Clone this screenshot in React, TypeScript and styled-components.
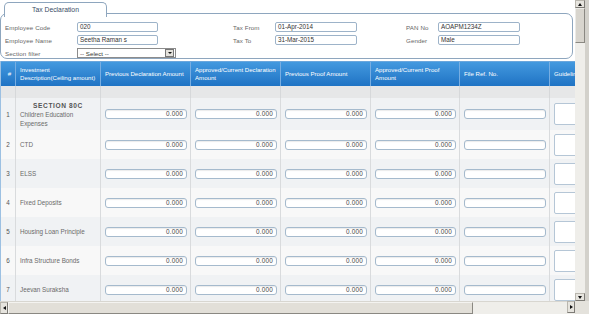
import styled, { createGlobalStyle } from "styled-components";

const GlobalStyle = createGlobalStyle`
  html, body {
    margin: 0;
    padding: 0;
    background: #fff;
  }
  body {
    font-family: "Liberation Sans", Arial, sans-serif;
  }
`;

const Frame = styled.div`
  width: 589px;
  height: 314px;
  overflow: hidden;
  display: grid;
  grid-template-columns: 575px 14px;
  grid-template-rows: 301px 13px;
  background: #fff;
`;

const Viewport = styled.div`
  overflow: hidden;
  display: flex;
  flex-direction: column;
`;

const TabRow = styled.div`
  display: flex;
  padding: 2px 0 0 4px;
  margin-bottom: -4px;
  position: relative;
  z-index: 1;
`;

const Tab = styled.div`
  width: 101px;
  height: 14px;
  border: 1px solid #8ea6be;
  border-bottom: none;
  border-radius: 5px 5px 0 0;
  background: #fff;
  color: #3a4d66;
  font-size: 6.8px;
  line-height: 14px;
  text-align: center;
`;

const Panel = styled.div`
  width: 573px;
  height: 50px;
  box-sizing: border-box;
  border: 1px solid #8ea6be;
  border-radius: 7px;
  padding: 8px 0 0 4px;
  display: grid;
  grid-template-columns: 72px 156px 42px 131px 32px 1fr;
  grid-auto-rows: 10px;
  row-gap: 3px;
  align-items: center;
`;

const Label = styled.span`
  font-size: 6.2px;
  color: #666;
  letter-spacing: 0.1px;
  white-space: nowrap;
`;

const TextBox = styled.div<{ $w?: number }>`
  width: ${(p) => p.$w ?? 82}px;
  height: 10px;
  box-sizing: border-box;
  border: 1px solid #9db3c9;
  border-radius: 2px;
  font-size: 6.3px;
  line-height: 8px;
  color: #333;
  padding-left: 2px;
  background: #fff;
`;

const SelectBox = styled.div`
  width: 99px;
  height: 10px;
  box-sizing: border-box;
  border: 1px solid #8c8c8c;
  display: flex;
  align-items: center;
  justify-content: space-between;
  font-size: 6.2px;
  color: #333;
  padding-left: 2px;
  background: #fff;
`;

const SelectButton = styled.span`
  width: 7px;
  height: 6px;
  margin-right: 1px;
  border: 1px solid #777;
  background: #e4e2dc;
  display: flex;
  align-items: center;
  justify-content: center;
  &::after {
    content: "";
    border-left: 2px solid transparent;
    border-right: 2px solid transparent;
    border-top: 2px solid #111;
  }
`;

const Table = styled.div`
  margin-top: 2px;
  border-left: 1px solid #9cc0e2;
  width: 660px;
`;

const cols = "15px 85px 90px 90px 90px 89px 90px 110px";

const HeadRow = styled.div`
  display: grid;
  grid-template-columns: ${cols};
  height: 24px;
  background: linear-gradient(#4399df, #1f73c4);
  border-top: 1px solid #6aa6dc;
`;

const HeadCell = styled.div<{ $center?: boolean }>`
  display: flex;
  align-items: center;
  justify-content: ${(p) => (p.$center ? "center" : "flex-start")};
  padding: 0 1px 0 4px;
  border-right: 1px solid #78aee2;
  color: #fff;
  font-size: 6.1px;
  line-height: 8.5px;
  white-space: pre-line;
`;

const Band = styled.div`
  display: grid;
  grid-template-columns: ${cols};
  height: 12px;
  background: #e6e7e8;
  & > div {
    border-right: 1px solid #d6d8da;
  }
`;

const BodyRow = styled.div<{ $alt: boolean }>`
  display: grid;
  grid-template-columns: ${cols};
  min-height: 29px;
  background: ${(p) => (p.$alt ? "#f0f2f4" : "#f8f8f8")};
`;

const Cell = styled.div<{ $pad?: string }>`
  display: flex;
  align-items: center;
  padding: ${(p) => p.$pad ?? "0"};
  border-right: 1px solid #d9dbdd;
`;

const NumCell = styled(Cell)`
  justify-content: center;
  font-size: 6.3px;
  color: #555;
`;

const DescCell = styled(Cell)`
  flex-direction: column;
  align-items: stretch;
  justify-content: center;
  padding: 2.5px 4px;
  font-size: 6.3px;
  line-height: 9px;
  color: #6a6a6a;
`;

const SectionTitle = styled.div`
  text-align: center;
  font-weight: bold;
  font-size: 6.6px;
  letter-spacing: 0.6px;
  color: #555;
`;

const AmountInput = styled.div`
  flex: 1;
  height: 10px;
  box-sizing: border-box;
  border: 1px solid #a5bacd;
  border-radius: 3px;
  background: #fff;
  box-shadow: inset 0 1px 1px rgba(0, 0, 0, 0.08);
  font-size: 6.4px;
  line-height: 8px;
  color: #444;
  text-align: right;
  padding-right: 3px;
  letter-spacing: 0.2px;
`;

const GuideBox = styled.div`
  width: 40px;
  height: 22px;
  box-sizing: border-box;
  border: 1px solid #b5c6d6;
  border-radius: 2px;
  background: #fff;
`;

const VScroll = styled.div`
  background: #efeeea;
  border-right: 4px solid #d3d1cb;
  display: flex;
  flex-direction: column;
`;

const HScroll = styled.div`
  background: #efeeea;
  border-top: 1px solid #d8d6d0;
  display: flex;
  align-items: stretch;
`;

const Corner = styled.div`
  background: #e4e2dc;
  width: 100%;
`;

const ArrowBtn = styled.div<{ $dir: "up" | "down" | "left" | "right" }>`
  flex: none;
  width: ${(p) => (p.$dir === "up" || p.$dir === "down" ? "10px" : "8px")};
  height: ${(p) => (p.$dir === "up" || p.$dir === "down" ? "8px" : "12px")};
  box-sizing: border-box;
  background: #e6e4de;
  border: 1px solid #b9b6ae;
  border-right-color: #7d7b76;
  border-bottom-color: #7d7b76;
  display: flex;
  align-items: center;
  justify-content: center;
  &::after {
    content: "";
    ${(p) =>
      p.$dir === "up"
        ? "border-left: 2.5px solid transparent; border-right: 2.5px solid transparent; border-bottom: 3px solid #111;"
        : p.$dir === "down"
        ? "border-left: 2.5px solid transparent; border-right: 2.5px solid transparent; border-top: 3px solid #111;"
        : p.$dir === "left"
        ? "border-top: 2.5px solid transparent; border-bottom: 2.5px solid transparent; border-right: 3px solid #111;"
        : "border-top: 2.5px solid transparent; border-bottom: 2.5px solid transparent; border-left: 3px solid #111;"}
  }
`;

const VThumb = styled.div`
  width: 10px;
  height: 35px;
  box-sizing: border-box;
  background: #d8d5ce;
  border: 1px solid #ecebe7;
  border-right-color: #8a8882;
  border-bottom-color: #8a8882;
`;

const VTrack = styled.div`
  flex: 1;
  width: 10px;
`;

const HThumb = styled.div`
  width: 465px;
  box-sizing: border-box;
  background: #e2dfd8;
  border: 1px solid #f4f3f0;
  border-right-color: #8a8882;
  border-bottom-color: #8a8882;
`;

const HTrack = styled.div`
  flex: 1;
`;

const HEnd = styled.div`
  display: flex;
  align-items: flex-end;
  padding-bottom: 1px;
`;

const VEnd = styled.div`
  display: flex;
  justify-content: flex-end;
`;

interface Row {
  no: number;
  name: string;
  section?: string;
}

const rows: Row[] = [
  { no: 1, name: "Children Education Expenses", section: "SECTION 80C" },
  { no: 2, name: "CTD" },
  { no: 3, name: "ELSS" },
  { no: 4, name: "Fixed Deposits" },
  { no: 5, name: "Housing Loan Principle" },
  { no: 6, name: "Infra Structure Bonds" },
  { no: 7, name: "Jeevan Suraksha" },
];

const headers = [
  "Investment\nDescription(Ceiling amount)",
  "Previous Declaration Amount",
  "Approved/Current Declaration\nAmount",
  "Previous Proof Amount",
  "Approved/Current Proof\nAmount",
  "File Ref. No.",
  "Guideline",
];

export default function App() {
  return (
    <>
      <GlobalStyle />
      <Frame>
        <Viewport>
          <TabRow>
            <Tab>Tax Declaration</Tab>
          </TabRow>
          <Panel>
            <Label>Employee Code</Label>
            <TextBox $w={81}>020</TextBox>
            <Label>Tax From</Label>
            <TextBox>01-Apr-2014</TextBox>
            <Label>PAN No</Label>
            <TextBox>AOAPM1234Z</TextBox>

            <Label>Employee Name</Label>
            <TextBox $w={81}>Seetha Raman s</TextBox>
            <Label>Tax To</Label>
            <TextBox>31-Mar-2015</TextBox>
            <Label>Gender</Label>
            <TextBox>Male</TextBox>

            <Label>Section filter</Label>
            <SelectBox>
              -- Select --
              <SelectButton />
            </SelectBox>
          </Panel>

          <Table>
            <HeadRow>
              <HeadCell $center>#</HeadCell>
              {headers.map((h) => (
                <HeadCell key={h}>{h}</HeadCell>
              ))}
            </HeadRow>
            <Band>
              {Array.from({ length: 8 }).map((_, i) => (
                <div key={i} />
              ))}
            </Band>
            {rows.map((r) => (
              <BodyRow key={r.no} $alt={r.no % 2 === 1}>
                <NumCell>{r.no}</NumCell>
                <DescCell>
                  {r.section && <SectionTitle>{r.section}</SectionTitle>}
                  <div>{r.name}</div>
                </DescCell>
                {[0, 1, 2, 3].map((k) => (
                  <Cell key={k} $pad="0 3px 0 4px">
                    <AmountInput>0.000</AmountInput>
                  </Cell>
                ))}
                <Cell $pad="0 3px 0 4px">
                  <AmountInput />
                </Cell>
                <Cell $pad="0 0 0 4px">
                  <GuideBox />
                </Cell>
              </BodyRow>
            ))}
          </Table>
        </Viewport>

        <VScroll>
          <ArrowBtn $dir="up" />
          <VThumb />
          <VTrack />
          <ArrowBtn $dir="down" />
        </VScroll>

        <HScroll>
          <ArrowBtn $dir="left" />
          <HThumb />
          <HTrack />
          <HEnd>
            <ArrowBtn $dir="right" />
          </HEnd>
        </HScroll>
        <VEnd>
          <Corner />
        </VEnd>
      </Frame>
    </>
  );
}
